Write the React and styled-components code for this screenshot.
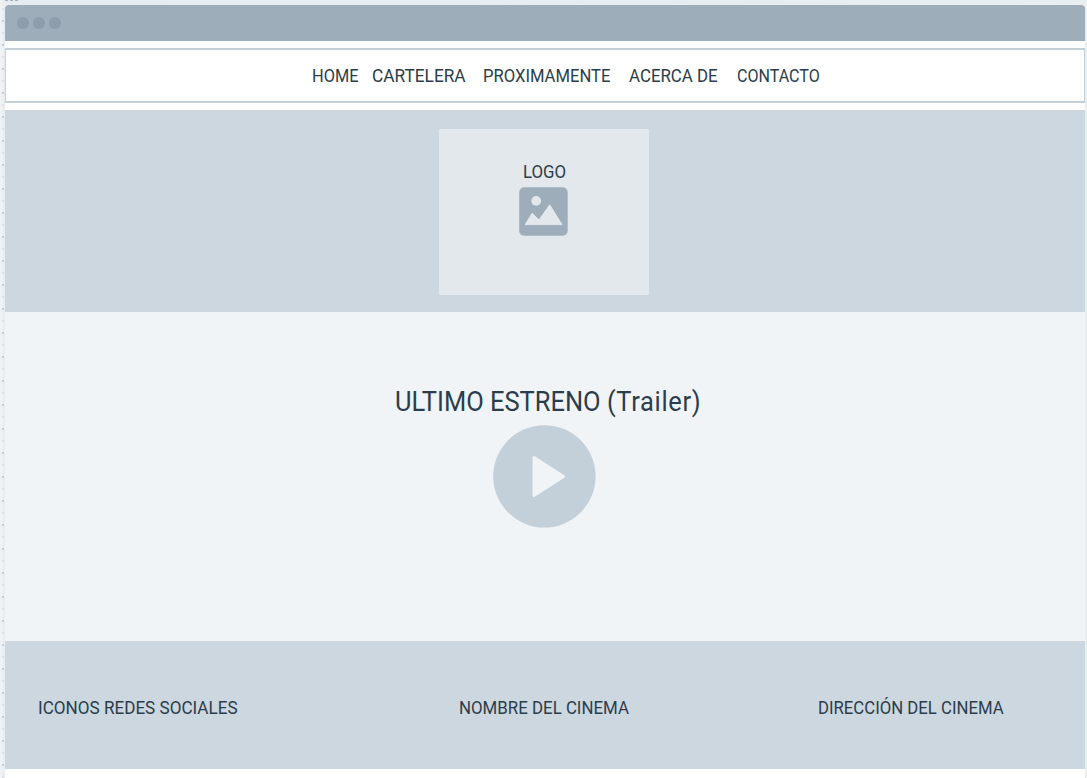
import React, { useLayoutEffect, useRef, useState } from "react";
import styled, { createGlobalStyle } from "styled-components";

const GlobalStyle = createGlobalStyle`
  * { box-sizing: border-box; }
  body {
    margin: 0;
    background: #edf1f4;
    font-family: Roboto, "Liberation Sans", sans-serif;
    color: #2b3d4b;
    overflow: hidden;
  }
`;

const Canvas = styled.div`
  position: relative;
  height: 778px;
  padding: 5px 2px 0 5px;
  overflow: hidden;
  background: linear-gradient(90deg, #f1f4f7, #e7ecf0 5px, #e9eef1);
`;

const GridDots = styled.div`
  position: absolute;
  left: 2px;
  top: 0;
  width: 2px;
  height: 778px;
  background: repeating-linear-gradient(
    transparent 0 8px,
    #dee3e8 8px 10px,
    transparent 10px 20px,
    #c5cfda 20px 22px,
    transparent 22px 24px
  );
`;

const Handle = styled.div`
  position: absolute;
  left: 5px;
  top: 0;
  width: 13px;
  height: 1px;
  background: repeating-linear-gradient(90deg, #a2b1be 0 3px, transparent 3px 5px);
`;

const Window = styled.div`
  display: flex;
  flex-direction: column;
  height: 773px;
  background: #fff;
  border-radius: 4px 4px 0 0;
  overflow: hidden;
`;

const TitleBar = styled.div`
  display: flex;
  align-items: center;
  gap: 4px;
  height: 36px;
  padding-left: 12px;
  background: #9eadba;
`;

const Dot = styled.span`
  width: 12px;
  height: 12px;
  border-radius: 50%;
  background: #8d9dac;
`;

const Nav = styled.nav`
  display: flex;
  align-items: center;
  height: 55px;
  margin: 7px 0;
  padding-left: 305.5px;
  border: solid #c3cfd9;
  border-width: 2px 1px;
`;

const Hero = styled.header`
  display: flex;
  justify-content: center;
  height: 202px;
  padding: 19px 2px 0 0;
  background: #cdd7e0;
`;

const LogoBox = styled.div`
  display: flex;
  flex-direction: column;
  align-items: center;
  width: 210px;
  height: 166px;
  padding-top: 32px;
  background: #e2e8ec;
`;

const LogoIcon = styled.svg`
  width: 49px;
  height: 49px;
  margin: 5px 1px 0 0;
`;

const Trailer = styled.main`
  display: flex;
  flex-direction: column;
  height: 329px;
  padding: 74px 0 0 390px;
  background: #f0f4f7;
`;

const PlayIcon = styled.svg`
  width: 103px;
  height: 103px;
  margin: 7px 0 0 98px;
`;

const Footer = styled.footer`
  display: flex;
  height: 128px;
  padding: 56px 0 0 32.5px;
  background: #cdd7e0;
`;

const LabelBox = styled.span`
  display: block;
  flex: none;
  width: ${(p) => p.$width}px;
  height: ${(p) => (p.$large ? 32 : 21)}px;
  margin-left: ${(p) => p.$gap || 0}px;
  font-size: ${(p) => (p.$large ? 26.8 : 18)}px;
  line-height: ${(p) => (p.$large ? 32 : 21)}px;
  white-space: nowrap;
`;

const LabelText = styled.span`
  display: inline-block;
  transform-origin: 0 50%;
`;

const Spaced = styled.span`
  letter-spacing: 0.7px;
`;

/* Condenses its text to exactly fill the given width. */
function Label({ width, gap, large, children }) {
  const ref = useRef(null);
  const [scale, setScale] = useState(1);
  useLayoutEffect(() => {
    setScale(width / ref.current.offsetWidth);
  }, [width, children]);
  return (
    <LabelBox $width={width} $gap={gap} $large={large}>
      <LabelText ref={ref} style={{ transform: `scaleX(${scale})` }}>
        {children}
      </LabelText>
    </LabelBox>
  );
}

export default function App() {
  return (
    <>
      <GlobalStyle />
      <Canvas>
        <GridDots />
        <Handle />
        <Window>
          <TitleBar>
            <Dot />
            <Dot />
            <Dot />
          </TitleBar>
          <Nav>
            <Label width={46.3}>HOME</Label>
            <Label width={94} gap={14.2}>CARTELERA</Label>
            <Label width={127.5} gap={17}>PROXIMAMENTE</Label>
            <Label width={89} gap={18.5}>ACERCA DE</Label>
            <Label width={83} gap={19}>CONTACTO</Label>
          </Nav>
          <Hero>
            <LogoBox>
              <Label width={43} gap={0.5}>LOGO</Label>
              <LogoIcon viewBox="0 0 49 49">
                <rect x="0.2" y="0.2" width="48.5" height="48.5" rx="5" fill="#9eadba" />
                <circle cx="17.2" cy="13.9" r="4.9" fill="#e2e8ec" />
                <path
                  d="M6.2 37.6 L13.2 26.2 L20 33 L30.7 17.8 L43 37.6 Z"
                  fill="#e2e8ec"
                  stroke="#e2e8ec"
                  strokeWidth="1"
                  strokeLinejoin="round"
                />
              </LogoIcon>
            </LogoBox>
          </Hero>
          <Trailer>
            <Label width={306} large>
              ULTIMO ESTRENO <Spaced>(Trailer)</Spaced>
            </Label>
            <PlayIcon viewBox="0 0 103 103">
              <circle cx="51.4" cy="51.4" r="51.2" fill="#c3cfd9" />
              <path
                d="M41 32.5 L70.5 51.5 L41 70.5 Z"
                fill="#f0f4f7"
                stroke="#f0f4f7"
                strokeWidth="3"
                strokeLinejoin="round"
              />
            </PlayIcon>
          </Trailer>
          <Footer>
            <Label width={199.5}>ICONOS REDES SOCIALES</Label>
            <Label width={169.5} gap={222}>NOMBRE DEL CINEMA</Label>
            <Label width={186} gap={189.5}>DIRECCIÓN DEL CINEMA</Label>
          </Footer>
        </Window>
      </Canvas>
    </>
  );
}
